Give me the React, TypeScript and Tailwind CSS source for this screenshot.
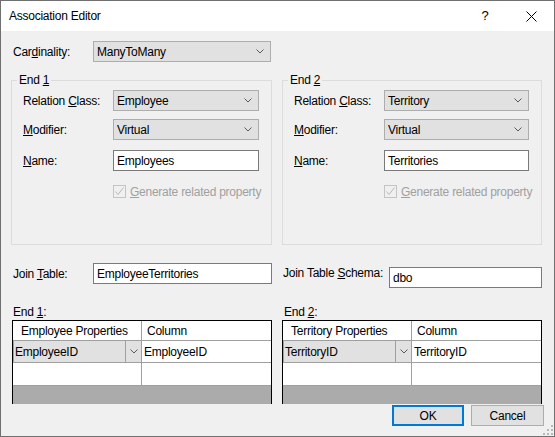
import React from 'react';

function Chevron() {
  return (
    <svg width="8" height="5" viewBox="0 0 8 5" className="shrink-0">
      <path d="M0.5 0.5 L4 4 L7.5 0.5" fill="none" stroke="#5a5a5a" strokeWidth="1" />
    </svg>
  );
}

function Combo({ value, className }: { value: string; className: string }) {
  return (
    <div className={`h-[21px] border border-[#adadad] bg-[#e1e1e1] flex items-center justify-between pl-[3px] pr-[6px] ${className}`}>
      <span>{value}</span>
      <Chevron />
    </div>
  );
}

function TextBox({ value, className }: { value: string; className: string }) {
  return (
    <div className={`h-[21px] border border-[#7a7a7a] bg-white flex items-center pl-[3px] ${className}`}>
      {value}
    </div>
  );
}

function Group({
  legend,
  width,
  comboWidth,
  cls,
  name,
}: {
  legend: React.ReactNode;
  width: string;
  comboWidth: string;
  cls: string;
  name: string;
}) {
  return (
    <div className={`relative border border-[#dcdcdc] h-[165px] pt-[9px] pl-[11px] ${width}`}>
      <div className="absolute top-[-9px] left-[5px] px-[2px] bg-[#f0f0f0]">{legend}</div>
      <div className="flex items-center h-[21px]">
        <div className="w-[90px]">
          Relation <u>C</u>lass:
        </div>
        <Combo value={cls} className={comboWidth} />
      </div>
      <div className="mt-[8px] flex items-center h-[21px]">
        <div className="w-[90px]">
          <u>M</u>odifier:
        </div>
        <Combo value="Virtual" className={comboWidth} />
      </div>
      <div className="mt-[10px] flex items-center h-[21px]">
        <div className="w-[90px]">
          <u>N</u>ame:
        </div>
        <TextBox value={name} className={comboWidth} />
      </div>
      <div className="mt-[14px] flex items-center h-[13px] pl-[90px]">
        <div className="w-[13px] h-[13px] border border-[#c4c4c4] bg-[#f0f0f0] flex items-center justify-center shrink-0">
          <svg width="11" height="11" viewBox="0 0 11 11">
            <path d="M1.5 5.5 L4 8.5 L9.5 1.5" fill="none" stroke="#b8b8b8" strokeWidth="1" />
          </svg>
        </div>
        <span className="ml-[4px] text-[#a0a0a0] whitespace-nowrap">
          <u>G</u>enerate related property
        </span>
      </div>
    </div>
  );
}

function DataGrid({ header, value }: { header: string; value: string }) {
  return (
    <div className="w-[260px] h-[84px] border-t border-l border-r border-black flex flex-col bg-[#ababab]">
      <div className="h-[20px] shrink-0 bg-white flex border-b border-[#a0a0a0]">
        <div className="w-[129px] border-r border-[#a0a0a0] pl-[8px] flex items-center">{header}</div>
        <div className="flex-1 pl-[5px] flex items-center">Column</div>
      </div>
      <div className="h-[22px] shrink-0 bg-white flex border-b border-[#a0a0a0]">
        <div className="w-[129px] border-r border-[#a0a0a0] flex">
          <div className="flex-1 bg-[#e1e1e1] border-l border-[#a0a0a0] flex items-center pl-[1px]">{value}</div>
          <div className="w-[16px] bg-[#e1e1e1] border-l border-[#a0a0a0] flex items-center justify-center">
            <Chevron />
          </div>
        </div>
        <div className="flex-1 pl-[2px] flex items-center">{value}</div>
      </div>
      <div className="h-[23px] shrink-0 bg-white flex border-b border-[#a0a0a0]">
        <div className="w-[129px] border-r border-[#a0a0a0]" />
        <div className="flex-1" />
      </div>
    </div>
  );
}

export default function App() {
  return (
    <div className="relative w-[555px] h-[437px] border border-[#707070] bg-[#f0f0f0] flex flex-col overflow-hidden font-['Segoe_UI','Liberation_Sans',sans-serif] text-[12px] leading-[16px] tracking-[-0.25px] text-black">
      <div className="h-[30px] bg-white flex items-center shrink-0">
        <div className="pl-[8px] flex-1">Association Editor</div>
        <div className="w-[46px] h-full flex items-center justify-center text-[13px]">?</div>
        <div className="w-[46px] h-full flex items-center justify-center">
          <svg width="11" height="11" viewBox="0 0 11 11">
            <path d="M0.5 0.5 L10.5 10.5 M10.5 0.5 L0.5 10.5" stroke="#000" strokeWidth="1" />
          </svg>
        </div>
      </div>

      <div className="flex flex-col pl-[10px] pr-[10px] flex-1">
        <div className="mt-[10px] flex items-center h-[21px]">
          <div className="w-[82px] pl-[2px]">
            Car<u>d</u>inality:
          </div>
          <Combo value="ManyToMany" className="w-[178px]" />
        </div>

        <div className="mt-[18px] flex gap-[10px]">
          <Group
            legend={
              <>
                End <u>1</u>
              </>
            }
            width="w-[261px]"
            comboWidth="w-[146px]"
            cls="Employee"
            name="Employees"
          />
          <Group
            legend={
              <>
                End <u>2</u>
              </>
            }
            width="w-[260px]"
            comboWidth="w-[145px]"
            cls="Territory"
            name="Territories"
          />
        </div>

        <div className="mt-[18px] flex gap-[10px] items-start h-[25px]">
          <div className="w-[261px] flex items-center">
            <div className="w-[82px] pl-[2px]">
              Join <u>T</u>able:
            </div>
            <TextBox value="EmployeeTerritories" className="w-[179px]" />
          </div>
          <div className="w-[260px] flex items-start">
            <div className="w-[107px] pl-[1px] mt-[2px]">
              Join Table <u>S</u>chema:
            </div>
            <TextBox value="dbo" className="w-[153px] mt-[4px]" />
          </div>
        </div>

        <div className="mt-[16px] flex gap-[10px]">
          <div className="w-[261px] pl-[2px]">
            End <u>1</u>:
          </div>
          <div className="w-[260px] pl-[2px]">
            End <u>2</u>:
          </div>
        </div>

        <div className="flex gap-[10px]">
          <div className="w-[261px] pl-[1px]">
            <DataGrid header="Employee Properties" value="EmployeeID" />
          </div>
          <div className="w-[260px]">
            <DataGrid header="Territory Properties" value="TerritoryID" />
          </div>
        </div>

        <div className="mt-[1px] flex justify-end gap-[7px]">
          <button className="w-[72px] h-[21px] border-2 border-[#0078d7] bg-[#e1e1e1] flex items-center justify-center">
            OK
          </button>
          <button className="w-[73px] h-[21px] border border-[#adadad] bg-[#e1e1e1] flex items-center justify-center">
            Cancel
          </button>
        </div>
      </div>

      <svg width="10" height="10" viewBox="0 0 10 10" className="absolute right-[1px] bottom-[1px]">
        <rect x="8" y="0" width="2" height="2" fill="#b8b8b8" />
        <rect x="4" y="4" width="2" height="2" fill="#b8b8b8" />
        <rect x="8" y="4" width="2" height="2" fill="#b8b8b8" />
        <rect x="0" y="8" width="2" height="2" fill="#b8b8b8" />
        <rect x="4" y="8" width="2" height="2" fill="#b8b8b8" />
        <rect x="8" y="8" width="2" height="2" fill="#b8b8b8" />
      </svg>
    </div>
  );
}
